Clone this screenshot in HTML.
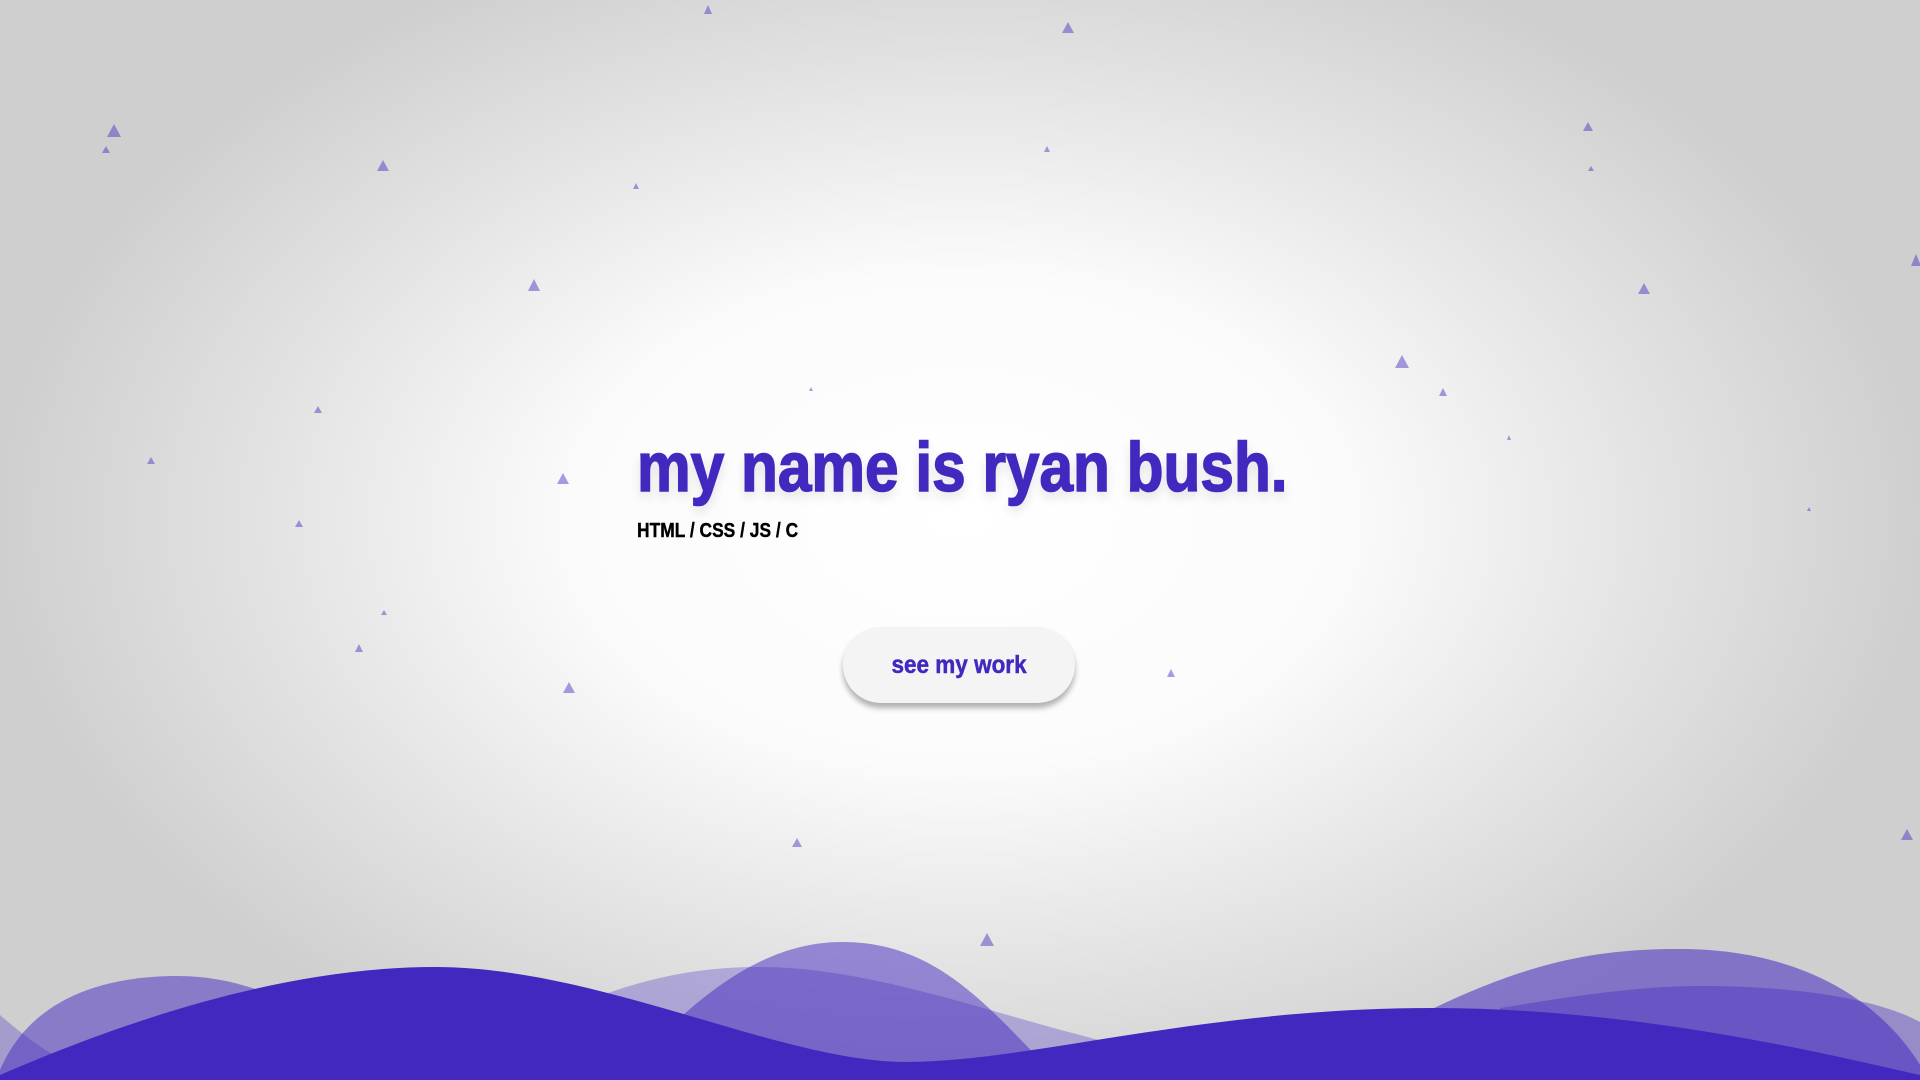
<!DOCTYPE html>
<html><head><meta charset="utf-8"><style>
html,body{margin:0;padding:0;width:1920px;height:1080px;overflow:hidden}
body{background:radial-gradient(ellipse 960px 620px at 960px 520px,#ffffff 0%,#fbfbfb 40%,#e3e3e3 72%,#cfcfcf 100%);font-family:"Liberation Sans",sans-serif;position:relative}
svg{position:absolute;left:0;top:0}
.t{position:absolute;left:637px;top:432px;font-size:70px;font-weight:bold;color:#4328bf;white-space:nowrap;transform:scaleX(0.862);transform-origin:left top;text-shadow:0 6px 12px rgba(0,0,0,0.12);line-height:1;-webkit-text-stroke:1.6px #4328bf}
.s{position:absolute;left:637px;top:521px;font-size:20px;font-weight:bold;color:#000;white-space:nowrap;transform:scaleX(0.87);transform-origin:left top;line-height:1;-webkit-text-stroke:0.4px #000}
.b{position:absolute;left:843px;top:627px;width:232px;height:76px;border-radius:38px;background:#f4f4f4;box-shadow:0 5px 6px rgba(0,0,0,0.3);text-align:center;line-height:76px;font-size:25px;font-weight:bold;color:#4328bf}
.b span{display:inline-block;transform:scaleX(0.9);-webkit-text-stroke:0.5px #4328bf}
</style></head><body>
<svg width="1920" height="1080" viewBox="0 0 1920 1080">
<g fill="rgba(67,40,191,0.45)">
<polygon points="708,5 712,14 704,14"/>
<polygon points="1068,22 1074,33 1062,33"/>
<polygon points="114,124 121,137 107,137"/>
<polygon points="106,146 110,153 102,153"/>
<polygon points="383,160 389,171 377,171"/>
<polygon points="636,183 639,189 633,189"/>
<polygon points="1047,146 1050,152 1044,152"/>
<polygon points="1588,122 1593,131 1583,131"/>
<polygon points="1591,166 1594,171 1588,171"/>
<polygon points="1916,254 1921,266 1911,266"/>
<polygon points="1644,283 1650,294 1638,294"/>
<polygon points="534,279 540,291 528,291"/>
<polygon points="1402,355 1409,368 1395,368"/>
<polygon points="1443,388 1447,396 1439,396"/>
<polygon points="1509,435 1511,440 1507,440"/>
<polygon points="811,387 813,391 809,391"/>
<polygon points="318,406 322,413 314,413"/>
<polygon points="151,457 155,464 147,464"/>
<polygon points="563,473 569,484 557,484"/>
<polygon points="299,520 303,527 295,527"/>
<polygon points="384,610 387,615 381,615"/>
<polygon points="359,644 363,652 355,652"/>
<polygon points="569,682 575,693 563,693"/>
<polygon points="1171,669 1175,677 1167,677"/>
<polygon points="797,838 802,847 792,847"/>
<polygon points="987,933 994,946 980,946"/>
<polygon points="1907,829 1913,840 1901,840"/>
<polygon points="1809,507 1811,511 1807,511"/>
</g>
<path d="M0,1015 C40,1050 80,1075 120,1080 L0,1080Z" fill="rgba(67,40,191,0.3)"/>
<path d="M540,1020 C620,985 680,967 759,967 C900,967 1050,1040 1200,1060 L1200,1080 L540,1080Z" fill="rgba(67,40,191,0.3)"/>
<path d="M1500,1008 C1580,995 1640,986 1702,986 C1800,986 1880,1000 1920,1022 L1920,1080 L1500,1080Z" fill="rgba(67,40,191,0.4)"/>
<path d="M0,1070 C30,1000 100,976 178,976 C260,976 330,1020 420,1080 L0,1080Z" fill="rgba(67,40,191,0.5)"/>
<path d="M620,1080 C690,1000 760,942 842,942 C940,942 990,1010 1060,1080Z" fill="rgba(67,40,191,0.5)"/>
<path d="M1420,1015 C1530,960 1600,949 1680,949 C1800,949 1880,1000 1920,1065 L1920,1080 L1420,1080Z" fill="rgba(67,40,191,0.55)"/>
<path d="M0,1075 C150,1010 300,967 435,967 C600,967 780,1062 906,1062 C1030,1062 1200,1008 1433,1008 C1650,1008 1850,1060 1920,1075 L1920,1080 L0,1080Z" fill="#4328bf"/>
</svg>
<div class="t">my name is ryan bush.</div>
<div class="s">HTML / CSS / JS / C</div>
<div class="b"><span>see my work</span></div>
</body></html>
